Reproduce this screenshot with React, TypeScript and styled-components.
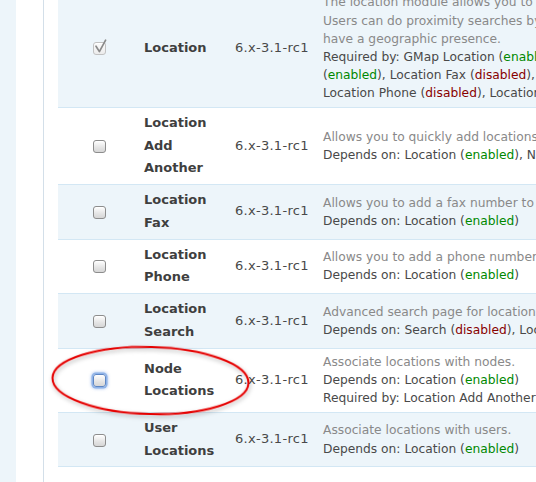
import React from 'react'
import styled, { createGlobalStyle } from 'styled-components'

const GlobalStyle = createGlobalStyle`
  html, body {
    margin: 0;
    padding: 0;
    background: #fff;
    overflow: hidden;
  }

  body {
    font-family: 'DejaVu Sans', Verdana, sans-serif;
    color: #494949;
  }
`

const Page = styled.div`
  position: relative;
  display: flex;
  height: 482px;
  overflow: hidden;
`

const Gutter = styled.div`
  width: 16px;
  flex: none;
  background: #edf5fa;
`

const Content = styled.div`
  flex: 1;
  margin-left: 27px;
  padding-left: 14px;
  border-left: 1px solid #d3dfe9;
  overflow: hidden;
`

const ModuleTable = styled.table`
  margin-top: -11px;
  width: 961px;
  table-layout: fixed;
  border-collapse: collapse;
`

const Row = styled.tr<{ $odd: boolean }>`
  background: ${(p) => (p.$odd ? '#edf5fa' : '#fff')};
  border-bottom: 1px solid #d3e7f4;
`

const CheckCell = styled.td`
  width: 82px;
  padding: 4.3px 0;
  text-align: center;
  vertical-align: middle;
  line-height: 13px;
`

const NameCell = styled.td`
  width: 83px;
  padding: 4.3px 4px;
  font-size: 13px;
  font-weight: bold;
  line-height: 22.5px;
  color: #3f3f3f;
  vertical-align: middle;
`

const VersionCell = styled.td`
  width: 80px;
  padding: 4.3px 4px;
  font-size: 13px;
  letter-spacing: 0.28px;
  line-height: 22.5px;
  white-space: nowrap;
  vertical-align: middle;
`

const DescCell = styled.td`
  padding: 4.3px 4px;
  font-size: 12.25px;
  line-height: 18.2px;
  white-space: nowrap;
  vertical-align: middle;
`

const Description = styled.div`
  color: #898989;
`

const Requirements = styled.div`
  color: #494949;
`

const Status = styled.span<{ $on: boolean }>`
  color: ${(p) => (p.$on ? '#080' : '#800')};
`

const Box = styled.span<{ $disabled?: boolean; $focused?: boolean }>`
  position: relative;
  display: inline-block;
  box-sizing: border-box;
  width: 13px;
  height: 13px;
  border: 1px solid ${(p) => (p.$disabled ? '#c2c2c2' : p.$focused ? '#5d86c4' : '#8d8d8d')};
  border-radius: 3px;
  background: ${(p) =>
    p.$disabled
      ? 'linear-gradient(#fbfbfb, #ececec)'
      : 'linear-gradient(#ffffff, #e4e4e4 60%, #d6d6d6)'};
  box-shadow: ${(p) =>
    p.$focused
      ? '0 0 0 1.5px #8fb3e8, 0 0 3px 2px rgba(110, 155, 225, 0.55)'
      : 'inset 0 1px 0 #fff'};
  vertical-align: middle;

  svg {
    position: absolute;
    left: 0;
    top: -4px;
    overflow: visible;
  }
`

type Dep = { name: string; on: boolean }

type Module = {
  name: string
  enabled?: boolean
  locked?: boolean
  focused?: boolean
  description: string[]
  dependsOn?: Dep[]
  requiredBy?: Dep[][]
}

const modules: Module[] = [
  {
    name: 'Location',
    enabled: true,
    locked: true,
    description: [
      'The location module allows you to associate a geographic location with content and users.',
      'Users can do proximity searches by postal code. This is useful for organizing communities that',
      'have a geographic presence.',
    ],
    requiredBy: [
      [
        { name: 'GMap Location', on: true },
        { name: 'Location Add Another', on: true },
      ],
      [
        { name: 'Location Fax', on: false },
        { name: 'Location Taxonomy', on: false },
      ],
      [
        { name: 'Location Phone', on: false },
        { name: 'Location Search', on: false },
        { name: 'Node Locations', on: false },
        { name: 'User Locations', on: false },
      ],
    ],
  },
  {
    name: 'Location Add Another',
    description: ['Allows you to quickly add locations directly from a node without having to click edit first.'],
    dependsOn: [
      { name: 'Location', on: true },
      { name: 'Node Locations', on: false },
    ],
  },
  {
    name: 'Location Fax',
    description: ['Allows you to add a fax number to a location.'],
    dependsOn: [{ name: 'Location', on: true }],
  },
  {
    name: 'Location Phone',
    description: ['Allows you to add a phone number to a location.'],
    dependsOn: [{ name: 'Location', on: true }],
  },
  {
    name: 'Location Search',
    description: ['Advanced search page for locations.'],
    dependsOn: [
      { name: 'Search', on: false },
      { name: 'Location', on: true },
    ],
  },
  {
    name: 'Node Locations',
    focused: true,
    description: ['Associate locations with nodes.'],
    dependsOn: [{ name: 'Location', on: true }],
    requiredBy: [[{ name: 'Location Add Another', on: false }]],
  },
  {
    name: 'User Locations',
    description: ['Associate locations with users.'],
    dependsOn: [{ name: 'Location', on: true }],
  },
]

function Checkbox({ checked, disabled, focused }: { checked?: boolean; disabled?: boolean; focused?: boolean }) {
  return (
    <Box $disabled={disabled} $focused={focused}>
      {checked && (
        <svg width="13" height="14" viewBox="0 0 13 14">
          <path
            d="M2 7.2 L5.4 12.6 L11.6 1.2"
            fill="none"
            stroke={disabled ? '#8a8a8a' : '#333'}
            strokeWidth="1.7"
            strokeLinecap="round"
            strokeLinejoin="round"
          />
        </svg>
      )}
    </Box>
  )
}

function DepList({ deps, trailing }: { deps: Dep[]; trailing?: boolean }) {
  return (
    <>
      {deps.map((d, i) => (
        <React.Fragment key={d.name}>
          {d.name} (<Status $on={d.on}>{d.on ? 'enabled' : 'disabled'}</Status>)
          {i < deps.length - 1 || trailing ? ', ' : ''}
        </React.Fragment>
      ))}
    </>
  )
}

function RequiredBy({ lines }: { lines: Dep[][] }) {
  return (
    <Requirements>
      Required by:{' '}
      {lines.map((line, li) => {
        const last = li === lines.length - 1
        if (li === 0 && lines.length > 1) {
          const head = line.slice(0, -1)
          const tail = line[line.length - 1]
          return (
            <React.Fragment key={li}>
              <DepList deps={head} trailing />
              {tail.name}
              <br />(<Status $on={tail.on}>{tail.on ? 'enabled' : 'disabled'}</Status>),{' '}
            </React.Fragment>
          )
        }
        return (
          <React.Fragment key={li}>
            <DepList deps={line} trailing={!last} />
            {!last && <br />}
          </React.Fragment>
        )
      })}
    </Requirements>
  )
}

function RedCircle() {
  return (
    <svg
      width="230"
      height="100"
      viewBox="0 0 230 100"
      style={{ position: 'absolute', left: 40, top: 332, pointerEvents: 'none' }}
    >
      <defs>
        <filter id="ring-shadow" x="-10%" y="-20%" width="120%" height="140%">
          <feDropShadow dx="1" dy="2" stdDeviation="2" floodColor="#000" floodOpacity="0.3" />
        </filter>
      </defs>
      <ellipse
        cx="110.5"
        cy="48.5"
        rx="98"
        ry="33.5"
        transform="rotate(1.5 110.5 48.5)"
        fill="none"
        stroke="#e50000"
        strokeWidth="2"
        filter="url(#ring-shadow)"
      />
    </svg>
  )
}

export default function App() {
  return (
    <>
      <GlobalStyle />
      <Page>
        <Gutter />
        <Content>
          <ModuleTable>
            <tbody>
              {modules.map((m, i) => (
                <Row key={m.name} $odd={i % 2 === 0}>
                  <CheckCell>
                    <Checkbox checked={m.enabled} disabled={m.locked} focused={m.focused} />
                  </CheckCell>
                  <NameCell>{m.name}</NameCell>
                  <VersionCell>6.x-3.1-rc1</VersionCell>
                  <DescCell>
                    <Description>
                      {m.description.map((line, li) => (
                        <React.Fragment key={li}>
                          {li > 0 && <br />}
                          {line}
                        </React.Fragment>
                      ))}
                    </Description>
                    {m.dependsOn && (
                      <Requirements>
                        Depends on: <DepList deps={m.dependsOn} />
                      </Requirements>
                    )}
                    {m.requiredBy && <RequiredBy lines={m.requiredBy} />}
                  </DescCell>
                </Row>
              ))}
            </tbody>
          </ModuleTable>
        </Content>
        <RedCircle />
      </Page>
    </>
  )
}
